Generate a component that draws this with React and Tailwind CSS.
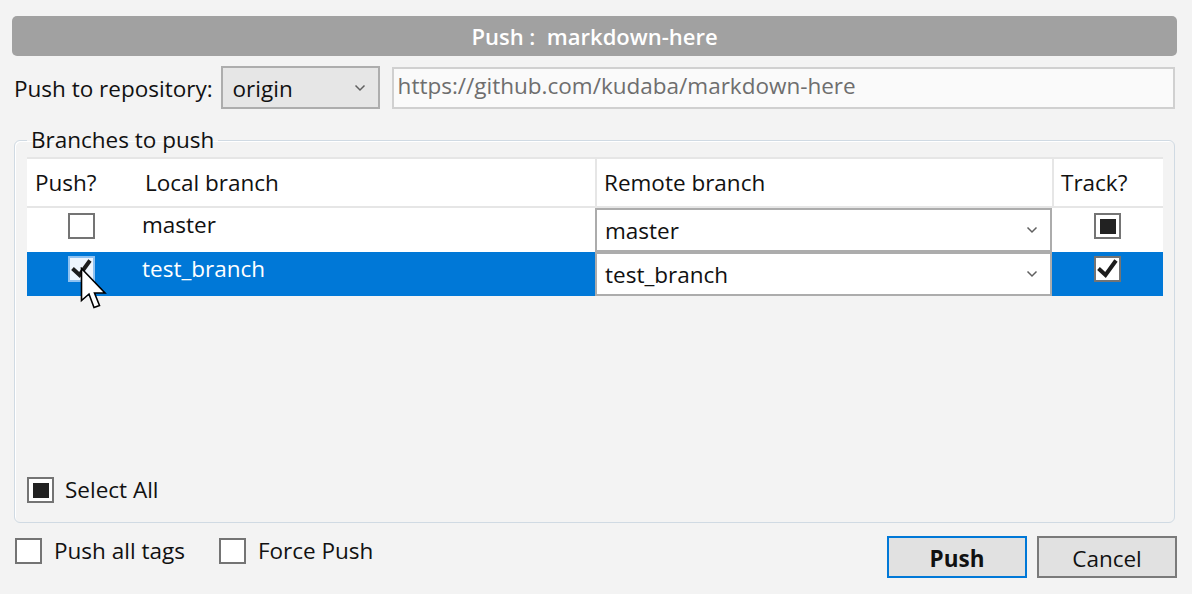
import React from "react";

function Check() {
  return (
    <svg viewBox="0 0 23 22" className="w-[23px] h-[22px]">
      <path d="M2.5 10.5 L9.5 17 L20 2.5" fill="none" stroke="#1c1c1c" strokeWidth="4" strokeLinecap="butt" strokeLinejoin="miter" />
    </svg>
  );
}

function Box({ state = "empty", selected = false }) {
  const base = selected
    ? "border-2 border-[#8fc2f1] bg-[#eef5fd]"
    : "border-2 border-[#747474] bg-white";
  return (
    <div className={"w-[27px] h-[26px] flex items-center justify-center shrink-0 " + base}>
      {state === "ind" && <div className="w-[16px] h-[15px] bg-[#222222]" />}
      {state === "checked" && <Check />}
    </div>
  );
}

function Chevron() {
  return (
    <svg width="12" height="8" viewBox="0 0 12 8" className="shrink-0">
      <polyline points="1.5,1.5 6,6 10.5,1.5" fill="none" stroke="#606060" strokeWidth="1.5" />
    </svg>
  );
}

function Cursor() {
  return (
    <svg width="28" height="44" viewBox="0 0 28 44" className="absolute left-[80px] top-[267px]">
      <path
        d="M1.5 1.5 L1.5 33.5 L9 27 L14 40.5 L19.5 38.5 L14.5 26 L25 26 Z"
        fill="#ffffff"
        stroke="#000000"
        strokeWidth="1.6"
        strokeLinejoin="miter"
      />
    </svg>
  );
}

export default function App() {
  return (
    <div className="relative w-[1192px] h-[594px] bg-[#f3f3f3] overflow-hidden font-['Segoe_UI','Open_Sans',sans-serif] text-[22.5px] text-[#111111]">
      {/* Title bar */}
      <div className="mt-[16px] mx-[12px] w-[1165px] h-[40px] rounded-[5px] bg-[#a1a1a1] flex items-center justify-center">
        <span className="text-white font-semibold text-[22px] leading-none whitespace-pre">Push :  markdown-here</span>
      </div>

      {/* Repository row */}
      <div className="mt-[10px] flex items-center h-[43px]">
        <span className="ml-[14px] leading-none mt-[3px]">Push to repository:</span>
        <div className="ml-[8px] w-[159px] h-[43px] border-2 border-[#adadad] bg-[#e6e6e6] flex items-center justify-between pl-[10px] pr-[12px]">
          <span className="leading-none mt-[3px]">origin</span>
          <Chevron />
        </div>
        <div className="ml-[12px] w-[783px] h-[42px] border-2 border-[#d0d0d0] bg-[#fafafa] flex items-center pl-[4px]">
          <span className="leading-none text-[#6e6e6e] -mt-[3px]">https://github.com/kudaba/markdown-here</span>
        </div>
      </div>

      {/* Group box */}
      <fieldset className="mt-[17px] ml-[14px] w-[1161px] border border-[#d0dae3] rounded-[6px] pl-[12px] pr-[10px] pb-[19px] shadow-[inset_1px_1px_0_#ffffff]">
        <legend className="px-[4px] leading-[28px]">Branches to push</legend>
        <div className="mt-[3px] h-[346px] flex flex-col">
          {/* table */}
          <div className="w-[1136px]">
            <div className="flex h-[51px] bg-white border-t-2 border-b-2 border-[#e6e6e6]">
              <div className="w-[109px] pl-[8px] flex items-center pt-[1px]">Push?</div>
              <div className="w-[459px] pl-[9px] flex items-center pt-[1px]">Local branch</div>
              <div className="w-[457px] pl-[7px] flex items-center pt-[1px] border-l-2 border-[#e6e6e6]">Remote branch</div>
              <div className="flex-1 pl-[7px] flex items-center pt-[1px] border-l-2 border-[#e6e6e6]">Track?</div>
            </div>
            {/* row 1 */}
            <div className="flex h-[44px] bg-white">
              <div className="w-[109px] pt-[5px] flex justify-center">
                <Box />
              </div>
              <div className="w-[459px] pl-[6px] pt-[3px] leading-[28px]">master</div>
              <div className="w-[457px] h-[44px] border-2 border-[#acacac] bg-white flex items-center justify-between pl-[8px] pr-[12px]">
                <span className="leading-none mt-[2px]">master</span>
                <Chevron />
              </div>
              <div className="flex-1 pt-[5px] flex justify-center">
                <Box state="ind" />
              </div>
            </div>
            {/* row 2 */}
            <div className="flex h-[44px] bg-[#0078d7]">
              <div className="w-[109px] pt-[4px] flex justify-center">
                <Box state="checked" selected />
              </div>
              <div className="w-[459px] pl-[6px] pt-[3px] leading-[28px] text-white">test_branch</div>
              <div className="w-[457px] h-[44px] border-2 border-[#acacac] bg-white flex items-center justify-between pl-[8px] pr-[12px]">
                <span className="leading-none mt-[2px]">test_branch</span>
                <Chevron />
              </div>
              <div className="flex-1 pt-[4px] flex justify-center">
                <Box state="checked" />
              </div>
            </div>
          </div>
          <div className="mt-auto flex items-center">
            <Box state="ind" />
            <span className="ml-[11px] leading-none">Select All</span>
          </div>
        </div>
      </fieldset>

      {/* Bottom row */}
      <div className="mt-[13px] flex items-start justify-between pl-[15px] pr-[15px]">
        <div className="flex items-center pt-[2px]">
          <Box />
          <span className="ml-[12px] leading-none">Push all tags</span>
          <div className="ml-[34px]">
            <Box />
          </div>
          <span className="ml-[12px] leading-none">Force Push</span>
        </div>
        <div className="flex gap-[10px]">
          <button className="w-[140px] h-[42px] pt-[4px] border-2 border-[#0078d7] bg-[#e1e1e1] font-bold leading-none text-[#111]">Push</button>
          <button className="w-[140px] h-[42px] pt-[4px] border-2 border-[#7a7a7a] bg-[#e1e1e1] leading-none text-[#111]">Cancel</button>
        </div>
      </div>

      <Cursor />
    </div>
  );
}
